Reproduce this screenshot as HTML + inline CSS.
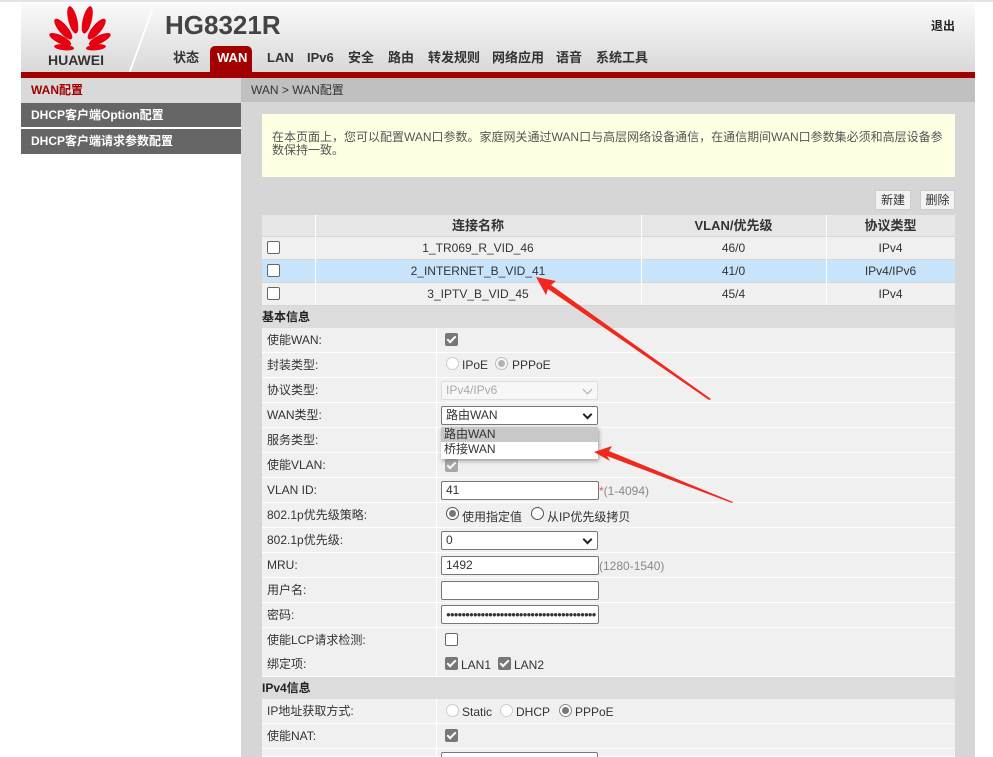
<!DOCTYPE html>
<html style="width:993px;height:757px;overflow:hidden"><head><meta charset="utf-8">
<style>
*{margin:0;padding:0;box-sizing:border-box}
body{width:993px;height:757px;overflow:hidden;background:#fff;font-family:"Liberation Sans","Noto Sans CJK SC",sans-serif;font-size:12px;color:#333;position:relative}
#wrap{position:absolute;left:0;top:0;width:993px;height:757px;overflow:hidden}
.a{position:absolute}
#hdr{left:21px;top:3px;width:954px;height:70px;background:linear-gradient(#fafafa,#d8d8d8)}
#red{left:21px;top:72px;width:954px;height:6px;background:#a30000}
.nav{top:47px;font-size:13px;font-weight:bold;color:#333}
.nl{top:50px}
#side{left:21px;top:78px;width:220px;height:679px;background:#fff}
.si{position:absolute;left:21px;width:220px;height:25px;line-height:25px;padding-left:10px;font-size:12px;font-weight:bold}
#main{left:241px;top:78px;width:734px;height:679px;background:#d6d6d6}
.row{position:absolute;left:262px;width:693px;height:25px;background:#f0f0f0;border-bottom:1px solid #fff}
.row .l{position:absolute;left:5px;top:0;line-height:24px;font-size:12px}
.row .v{position:absolute;left:174px;top:0;width:1px;height:25px;background:#fff}
.sec{position:absolute;left:262px;width:693px;height:22px;background:#dcdcdc;font-weight:bold;line-height:22px;font-size:12px;color:#222}
.cb{position:absolute;width:13px;height:13px;border-radius:2px}
.cbk{background:#777;}
.cbk:after{content:"";position:absolute;left:4px;top:1px;width:3px;height:7px;border:solid #fff;border-width:0 2px 2px 0;transform:rotate(45deg)}
.cbe{border:1px solid #666;background:#fff}
.inp{position:absolute;height:19px;border:1px solid #777;border-radius:2px;background:#fff;font-size:12px;line-height:17px;padding-left:4px}
.rad{position:absolute;width:13px;height:13px;border-radius:50%;border:1px solid #ccc;background:#fff}
.rads{border-color:#888}
.rads:after{content:"";position:absolute;left:2px;top:2px;width:7px;height:7px;border-radius:50%;background:#777}
.t{position:absolute;font-size:12px}
.td{position:absolute;height:22px;line-height:22px;text-align:center;font-size:12px}
.chev{position:absolute;right:6px;top:4px;width:7px;height:7px;border:solid #222;border-width:0 2px 2px 0;transform:rotate(45deg)}
</style></head><body><div id="wrap">
<div class="a" style="left:0;top:0;width:993px;height:2px;background:#e4e4e4"></div>
<div class="a" id="hdr"></div>
<svg class="a" style="left:45px;top:5px" width="70" height="48" viewBox="0 0 70 48">
<g fill="#e60012">
<ellipse cx="35" cy="14" rx="4.5" ry="14" transform="rotate(-14 35 44)"/>
<ellipse cx="35" cy="14" rx="4.5" ry="14" transform="rotate(14 35 44)"/>
<ellipse cx="35" cy="18" rx="4.5" ry="13" transform="rotate(-40 35 44)"/>
<ellipse cx="35" cy="18" rx="4.5" ry="13" transform="rotate(40 35 44)"/>
<ellipse cx="35" cy="22" rx="4" ry="12" transform="rotate(-64 35 44)"/>
<ellipse cx="35" cy="22" rx="4" ry="12" transform="rotate(64 35 44)"/>
<ellipse cx="35" cy="28" rx="3" ry="10" transform="rotate(-84 35 44)"/>
<ellipse cx="35" cy="28" rx="3" ry="10" transform="rotate(84 35 44)"/>
</g></svg>
<div class="a" style="left:48px;top:52px;font-size:14px;font-weight:bold;color:#333">HUAWEI</div>
<div class="a" style="left:140px;top:10px;width:2px;height:62px;background:#fff;transform:skewX(-20deg)"></div>
<div class="a" style="left:165px;top:10px;font-size:26px;font-weight:bold;color:#444">HG8321R</div>
<div class="a" style="left:931px;top:17px;font-size:12px;font-weight:bold;color:#222">退出</div>
<div class="a" style="left:210px;top:46px;width:42px;height:27px;background:#a30000;border-radius:5px 5px 0 0"></div>
<div class="a nav" style="left:173px">状态</div>
<div class="a nav nl" style="left:217px;color:#fff">WAN</div>
<div class="a nav nl" style="left:267px">LAN</div>
<div class="a nav nl" style="left:307px">IPv6</div>
<div class="a nav" style="left:348px">安全</div>
<div class="a nav" style="left:388px">路由</div>
<div class="a nav" style="left:428px">转发规则</div>
<div class="a nav" style="left:492px">网络应用</div>
<div class="a nav" style="left:556px">语音</div>
<div class="a nav" style="left:596px">系统工具</div>
<div class="a" id="red"></div>
<div class="a" id="side"></div>
<div class="si" style="top:78px;background:#d9d9d9;color:#a30000">WAN配置</div>
<div class="si" style="top:103px;background:#666;color:#fff;border-bottom:1px solid #fff">DHCP客户端Option配置</div>
<div class="si" style="top:129px;background:#666;color:#fff">DHCP客户端请求参数配置</div>
<div class="a" id="main"></div>
<div class="a" style="left:241px;top:78px;width:734px;height:24px;background:#c0c0c0;line-height:24px;padding-left:10px;color:#333">WAN &gt; WAN配置</div>
<div class="a" style="left:262px;top:114px;width:693px;height:63px;background:#ffffe3;padding:17px 10px 0 10px;line-height:13px;color:#555">在本页面上，您可以配置WAN口参数。家庭网关通过WAN口与高层网络设备通信，在通信期间WAN口参数集必须和高层设备参数保持一致。</div>
<div class="a" style="left:875px;top:190px;width:36px;height:20px;background:#f3f3f3;border:1px solid #ccc;text-align:center;line-height:18px;color:#333">新建</div>
<div class="a" style="left:920px;top:190px;width:35px;height:20px;background:#f3f3f3;border:1px solid #ccc;text-align:center;line-height:18px;color:#333">删除</div>
<div class="a" style="left:262px;top:215px;width:693px;height:21px;background:#e6e6e6"></div>
<div class="a" style="left:262px;top:237px;width:693px;height:22px;background:#f0f0f0"></div>
<div class="a" style="left:262px;top:260px;width:693px;height:22px;background:#c8e4fa"></div>
<div class="a" style="left:262px;top:283px;width:693px;height:22px;background:#f0f0f0"></div>
<div class="a" style="left:315px;top:215px;width:1px;height:90px;background:#fff"></div>
<div class="a" style="left:641px;top:215px;width:1px;height:90px;background:#fff"></div>
<div class="a" style="left:826px;top:215px;width:1px;height:90px;background:#fff"></div>
<div class="td" style="left:315px;top:215px;width:326px;font-weight:bold;font-size:13px">连接名称</div>
<div class="td" style="left:641px;top:215px;width:185px;font-weight:bold;font-size:13px">VLAN/优先级</div>
<div class="td" style="left:826px;top:215px;width:129px;font-weight:bold;font-size:13px">协议类型</div>
<div class="td" style="left:315px;top:237px;width:326px">1_TR069_R_VID_46</div>
<div class="td" style="left:641px;top:237px;width:185px">46/0</div>
<div class="td" style="left:826px;top:237px;width:129px">IPv4</div>
<div class="td" style="left:315px;top:260px;width:326px">2_INTERNET_B_VID_41</div>
<div class="td" style="left:641px;top:260px;width:185px">41/0</div>
<div class="td" style="left:826px;top:260px;width:129px">IPv4/IPv6</div>
<div class="td" style="left:315px;top:283px;width:326px">3_IPTV_B_VID_45</div>
<div class="td" style="left:641px;top:283px;width:185px">45/4</div>
<div class="td" style="left:826px;top:283px;width:129px">IPv4</div>
<div class="cb cbe" style="left:267px;top:241px"></div>
<div class="cb cbe" style="left:267px;top:264px"></div>
<div class="cb cbe" style="left:267px;top:287px"></div>
<div class="sec" style="top:306px">基本信息</div>
<div class="row" style="top:328px"><span class="l">使能WAN:</span><i class="v"></i></div>
<div class="row" style="top:353px"><span class="l">封装类型:</span><i class="v"></i></div>
<div class="row" style="top:378px"><span class="l">协议类型:</span><i class="v"></i></div>
<div class="row" style="top:403px"><span class="l">WAN类型:</span><i class="v"></i></div>
<div class="row" style="top:428px"><span class="l">服务类型:</span><i class="v"></i></div>
<div class="row" style="top:453px"><span class="l">使能VLAN:</span><i class="v"></i></div>
<div class="row" style="top:478px"><span class="l">VLAN ID:</span><i class="v"></i></div>
<div class="row" style="top:503px"><span class="l">802.1p优先级策略:</span><i class="v"></i></div>
<div class="row" style="top:528px"><span class="l">802.1p优先级:</span><i class="v"></i></div>
<div class="row" style="top:553px"><span class="l">MRU:</span><i class="v"></i></div>
<div class="row" style="top:578px"><span class="l">用户名:</span><i class="v"></i></div>
<div class="row" style="top:603px"><span class="l">密码:</span><i class="v"></i></div>
<div class="row" style="top:628px"><span class="l">使能LCP请求检测:</span><i class="v"></i></div>
<div class="row" style="top:652px"><span class="l">绑定项:</span><i class="v"></i></div>
<div class="sec" style="top:677px">IPv4信息</div>
<div class="row" style="top:699px"><span class="l">IP地址获取方式:</span><i class="v"></i></div>
<div class="row" style="top:724px"><span class="l">使能NAT:</span><i class="v"></i></div>
<div class="row" style="top:749px;height:8px"><i class="v" style="height:8px"></i></div>
<div class="cb cbk" style="left:445px;top:333px"></div>
<div class="rad" style="left:446px;top:357px"></div><div class="t" style="left:462px;top:358px">IPoE</div>
<div class="rad rads" style="left:495px;top:357px;opacity:.5"></div><div class="t" style="left:512px;top:358px">PPPoE</div>
<div class="inp" style="left:441px;top:381px;width:157px;border-color:#ddd;color:#aaa;background:#f7f7f7">IPv4/IPv6<span class="chev" style="border-color:#aaa;border-width:0 1px 1px 0"></span></div>
<div class="inp" style="left:441px;top:406px;width:157px">路由WAN<span class="chev"></span></div>
<div class="a" style="left:441px;top:427px;width:157px;height:32px;background:#fff;box-shadow:1px 2px 4px rgba(0,0,0,.35)"></div>
<div class="a" style="left:441px;top:427px;width:157px;height:15px;background:#c8c8c8;padding-left:3px;line-height:15px">路由WAN</div>
<div class="a" style="left:441px;top:442px;width:157px;height:15px;padding-left:3px;line-height:15px">桥接WAN</div>
<div class="cb cbk" style="left:445px;top:459px;opacity:.6"></div>
<div class="inp" style="left:441px;top:481px;width:158px">41</div>
<div class="t" style="left:599px;top:484px;color:#888"><span style="color:#e55">*</span>(1-4094)</div>
<div class="rad rads" style="left:446px;top:507px;border-color:#555"></div><div class="t" style="left:462px;top:508px">使用指定值</div>
<div class="rad" style="left:531px;top:507px;border-color:#555"></div><div class="t" style="left:547px;top:508px">从IP优先级拷贝</div>
<div class="inp" style="left:441px;top:531px;width:157px">0<span class="chev"></span></div>
<div class="inp" style="left:441px;top:556px;width:158px">1492</div>
<div class="t" style="left:599px;top:559px;color:#888">(1280-1540)</div>
<div class="inp" style="left:441px;top:581px;width:158px"></div>
<div class="inp" style="left:441px;top:605px;width:158px;font-size:8px;letter-spacing:-1px;overflow:hidden;white-space:nowrap">●●●●●●●●●●●●●●●●●●●●●●●●●●●●●●●●●●●●●●●</div>
<div class="cb cbe" style="left:445px;top:633px"></div>
<div class="cb cbk" style="left:445px;top:657px"></div><div class="t" style="left:461px;top:658px">LAN1</div>
<div class="cb cbk" style="left:498px;top:657px"></div><div class="t" style="left:514px;top:658px">LAN2</div>
<div class="rad" style="left:446px;top:704px"></div><div class="t" style="left:462px;top:705px">Static</div>
<div class="rad" style="left:500px;top:704px"></div><div class="t" style="left:516px;top:705px">DHCP</div>
<div class="rad rads" style="left:559px;top:704px"></div><div class="t" style="left:575px;top:705px">PPPoE</div>
<div class="cb cbk" style="left:445px;top:729px"></div>
<div class="inp" style="left:441px;top:752px;width:157px;height:10px"></div>
<svg class="a" style="left:0;top:0" width="993" height="757">
<g fill="#f0281e">
<polygon points="536,277 556,281 551,285 711,399 709,400 548,289 546,295"/>
<polygon points="594,452 612,446 609,451 733,502 732,503 607,456 610,461"/>
</g></svg>
</div></body></html>
